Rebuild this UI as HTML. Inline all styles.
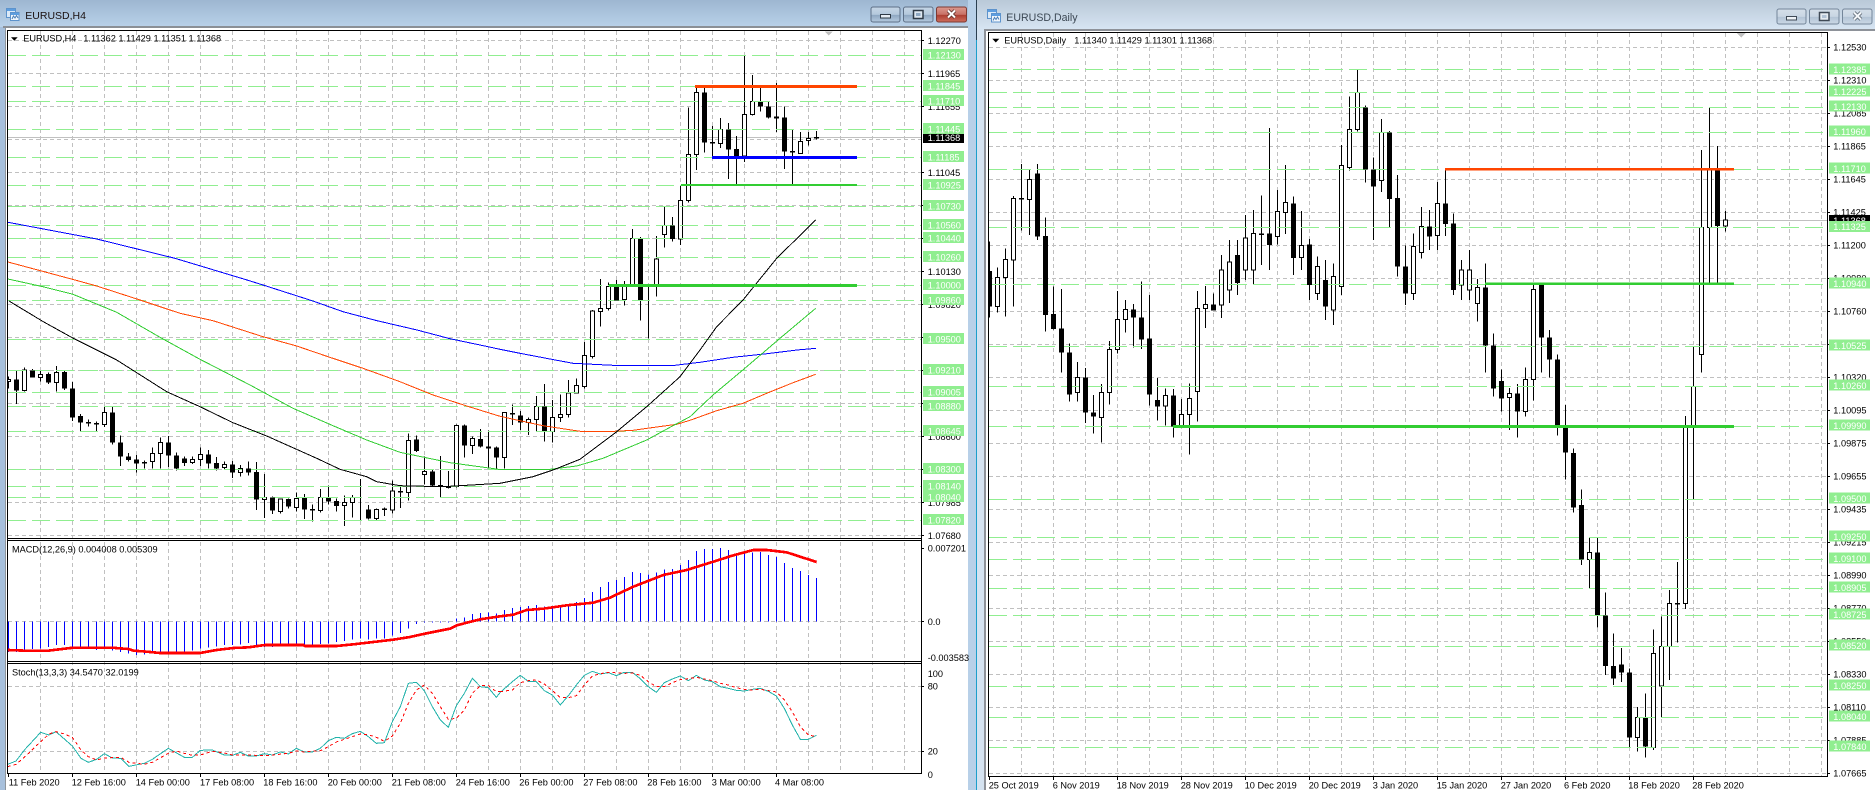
<!DOCTYPE html>
<html><head><meta charset="utf-8"><title>EURUSD</title>
<style>html,body{margin:0;padding:0;background:#fff;width:1875px;height:790px;overflow:hidden}svg{display:block}text{font-family:"Liberation Sans",sans-serif}</style></head>
<body>
<svg xmlns="http://www.w3.org/2000/svg" width="1875" height="790" viewBox="0 0 1875 790">
<defs>
<linearGradient id="t1" x1="0" y1="0" x2="0" y2="1"><stop offset="0" stop-color="#9db6d1"/><stop offset="1" stop-color="#b9d1e9"/></linearGradient>
<linearGradient id="t2" x1="0" y1="0" x2="0" y2="1"><stop offset="0" stop-color="#b9c9d8"/><stop offset="1" stop-color="#d6e4f2"/></linearGradient>
<linearGradient id="b1" x1="0" y1="0" x2="0" y2="1"><stop offset="0" stop-color="#c6d6e6"/><stop offset=".5" stop-color="#b4c8dc"/><stop offset=".55" stop-color="#8fa8c2"/><stop offset="1" stop-color="#b4c9de"/></linearGradient>
<linearGradient id="b2" x1="0" y1="0" x2="0" y2="1"><stop offset="0" stop-color="#d5dfe9"/><stop offset=".5" stop-color="#c9d6e3"/><stop offset=".55" stop-color="#b3c4d6"/><stop offset="1" stop-color="#ccd9e6"/></linearGradient>
<linearGradient id="b3" x1="0" y1="0" x2="0" y2="1"><stop offset="0" stop-color="#dc9a90"/><stop offset=".5" stop-color="#c87166"/><stop offset=".55" stop-color="#ad3f33"/><stop offset="1" stop-color="#cf6e5c"/></linearGradient>
<clipPath id="c1"><rect x="8" y="31" width="913" height="507"/></clipPath>
<clipPath id="c2"><rect x="989" y="33" width="838" height="743"/></clipPath>
</defs>

<!-- frames -->
<rect width="1875" height="790" fill="#fff"/>
<rect x="0" y="0" width="6" height="790" fill="#a7c0dc"/>
<rect x="5" y="27" width="1" height="763" fill="#8f959b"/>
<rect x="0" y="0" width="969" height="27" fill="url(#t1)"/>
<rect x="3" y="26" width="966" height="2" fill="#8b9096"/>
<rect x="968" y="0" width="8" height="790" fill="#b8d0e8"/>
<rect x="976" y="0" width="1" height="790" fill="#1c9ecb"/>
<rect x="976" y="0" width="1" height="40" fill="#2a3f50"/>
<rect x="977" y="0" width="898" height="29" fill="url(#t2)"/>
<rect x="977" y="29" width="8" height="761" fill="#d5e3f1"/>
<rect x="984" y="29" width="891" height="2" fill="#8e9299"/>
<rect x="984" y="29" width="2" height="761" fill="#8e9299"/>

<!-- icons -->
<g shape-rendering="crispEdges">
<rect x="6.5" y="8.5" width="9" height="9" fill="#dbe9f7" stroke="#5d93cc"/><rect x="7" y="9" width="8" height="2" fill="#5d9ee0"/>
<rect x="10.5" y="12.5" width="8.5" height="8" fill="#f2f7fc" stroke="#5d93cc"/><rect x="11" y="13" width="8" height="2" fill="#5d9ee0"/>
<rect x="987.5" y="9.5" width="9" height="9" fill="#dbe9f7" stroke="#5d93cc"/><rect x="988" y="10" width="8" height="2" fill="#5d9ee0"/>
<rect x="991.5" y="13.5" width="9" height="8.5" fill="#f2f7fc" stroke="#5d93cc"/><rect x="992" y="14" width="8" height="2" fill="#5d9ee0"/>
</g>
<path d="M12 19l1.5-3 1.5 2 1.5-2.5 1.5 2.5" fill="none" stroke="#4a7fb8"/>
<path d="M993 20.500l1.500-3 1.500 2 1.500-2.500 1.500 2.500" fill="none" stroke="#4a7fb8"/>
<text x="25.300" y="19" font-size="10.500" fill="#1a1010">EURUSD,H4</text>
<text x="1006.300" y="21" font-size="10.600" fill="#3c4854">EURUSD,Daily</text>

<!-- buttons w1 -->
<rect x="871" y="7" width="29" height="15" rx="2" fill="url(#b1)" stroke="#5e7087"/>
<rect x="880.500" y="14.500" width="10" height="3.500" fill="#e6edf4" stroke="#2f3a46"/>
<rect x="903.500" y="7" width="29.500" height="15" rx="2" fill="url(#b1)" stroke="#5e7087"/>
<rect x="913.500" y="10.500" width="9.500" height="8" fill="#dfe8f1" stroke="#2f3a46" stroke-width="1.500"/><rect x="916" y="13" width="4.500" height="3" fill="#8fa8c2"/>
<rect x="936.500" y="7" width="30" height="15" rx="2" fill="url(#b3)" stroke="#7d3a33"/>
<path d="M948 10.500l7 7M955 10.500l-7 7" stroke="#5a2a25" stroke-width="3.600"/>
<path d="M948 10.500l7 7M955 10.500l-7 7" stroke="#fff" stroke-width="2"/>
<!-- buttons w2 -->
<rect x="1777" y="9" width="29" height="15" rx="2" fill="url(#b2)" stroke="#74869a"/>
<rect x="1786.500" y="16.500" width="10" height="3.500" fill="#eef2f6" stroke="#3f4a56"/>
<rect x="1809.500" y="9" width="29.500" height="15" rx="2" fill="url(#b2)" stroke="#74869a"/>
<rect x="1819.500" y="12.500" width="9.500" height="8" fill="#e6ecf2" stroke="#3f4a56" stroke-width="1.500"/><rect x="1822" y="15" width="4.500" height="3" fill="#b3c4d6"/>
<rect x="1842.500" y="9" width="29.500" height="15" rx="2" fill="url(#b2)" stroke="#74869a"/>
<path d="M1854 12.500l7 7M1861 12.500l-7 7" stroke="#55606c" stroke-width="3.600"/>
<path d="M1854 12.500l7 7M1861 12.500l-7 7" stroke="#f4f7fa" stroke-width="2"/>

<!-- ===== H4 grid ===== -->
<g fill="none" stroke="#c0c0c0" stroke-width="1" stroke-dasharray="4 3" shape-rendering="crispEdges">
<path d="M40.500 31V773m32-742V773m32-742V773m32-742V773m32-742V773m32-742V773m32-742V773m32-742V773m32-742V773m32-742V773m32-742V773m32-742V773m32-742V773m32-742V773m32-742V773m32-742V773m32-742V773m32-742V773m32-742V773m32-742V773m32-742V773m32-742V773m32-742V773m32-742V773m32-742V773m32-742V773m32-742V773m32-742V773"/>
<path d="M8 40.500H921m-913 33H921m-913 33H921m-913 33H921m-913 33H921m-913 33H921m-913 33H921m-913 33H921m-913 33H921m-913 33H921m-913 33H921m-913 33H921m-913 33H921m-913 33H921m-913 33H921m-913 33H921"/>
<path d="M8 621.500H921M8 686.500H921M8 751.500H921"/>
</g>
<path d="M8 137.500H921" stroke="#c0c0c0" shape-rendering="crispEdges"/>

<g clip-path="url(#c1)" shape-rendering="crispEdges">
<!-- wicks + white bodies -->
<g transform="translate(0 280) scale(.33333)">
<path stroke="#000" stroke-width="3" fill="none" d="M25 290V325M49 272V372M73 262V335M97 267V293M121 272V305M145 278V312M169 258V335M193 272V330M217 306V423M241 402V453M265 418V440M289 425V453M313 380V441M337 381V494M361 466V558M385 519V545M409 525V578M433 542V565M457 502V565M481 472V565M505 468V561M529 518V572M553 530V558M577 530V552M601 502V558M625 510V566M649 531V572M673 544V569M697 543V594M721 555V590M745 544V587M769 546V690M793 582V714M817 650V702M841 655V700M865 655V686M889 638V695M913 642V717M937 673V725M961 627V698M985 617V674M1009 655V695M1033 646V738M1057 645V713M1081 597V722M1105 675V719M1129 685V720M1153 683V708M1177 602V701M1201 620V684M1225 460V662M1249 466V516M1273 530V614M1297 569V620M1321 528V652M1345 573V625M1369 434V622M1393 434V533M1417 470V522M1441 447V503M1465 452V565M1489 500V568"/>
<path stroke="#000" stroke-width="3" fill="#fff" d="M19 298h12V304h-12zM67 270h12V332h-12zM115 283h12V292h-12zM163 277h12V307h-12zM307 397h12V433h-12zM451 520h12V544h-12zM475 488h12V520h-12zM571 538h12V548h-12zM595 523h12V539h-12zM667 553h12V563h-12zM715 565h12V577h-12zM787 652h12V658h-12zM835 657h12V694h-12zM883 655h12V682h-12zM955 652h12V692h-12zM1027 667h12V676h-12zM1051 652h12V667h-12zM1123 688h12V716h-12zM1171 633h12V690h-12zM1219 481h12V637h-12zM1267 574h12V583h-12zM1363 436h12V620h-12zM1411 475h12V496h-12z"/>
</g>
<g transform="translate(500 260) scale(.33333)">
<path stroke="#000" stroke-width="3" fill="none" d="M13 457V625M37 433V495M61 453V510M85 472V525M109 408V513M133 372V545M157 420V548M181 403V486M205 360V473M229 355V400M253 246V385M277 150V296M301 57V200M325 68V152M349 60V122M373 63V137M397 -93V80M421 -69V182M445 78V236M469 -72V110"/>
<path stroke="#000" stroke-width="3" fill="#fff" d="M7 457h12V592h-12zM79 479h12V487h-12zM103 439h12V479h-12zM151 472h12V514h-12zM175 463h12V472h-12zM199 399h12V464h-12zM223 376h12V399h-12zM247 286h12V379h-12zM271 153h12V290h-12zM295 146h12V154h-12zM319 79h12V146h-12zM367 79h12V118h-12zM391 -65h12V79h-12zM463 -3h12V75h-12z"/>
</g>
<g transform="translate(500 0) scale(.33333)">
<path stroke="#000" stroke-width="3" fill="none" d="M493 620V743M517 651V725M541 557V735M565 323V607M589 258V510M613 258V458M637 378V472M661 354V444M685 369V537M709 408V552M733 168V486M757 225V347M781 264V335M805 304V356M829 249V396M853 319V507M877 390V552M901 396V462M925 396V437M949 393V418"/>
<path stroke="#000" stroke-width="3" fill="#fff" d="M487 677h12V703h-12zM535 601h12V717h-12zM559 463h12V601h-12zM583 277h12V463h-12zM655 388h12V430h-12zM727 343h12V468h-12zM751 304h12V343h-12zM895 424h12V460h-12zM919 415h12V421h-12z"/>
</g>
</g>

<!-- H4 green lines -->
<path fill="none" stroke="#90ee90" stroke-dasharray="18 6" shape-rendering="crispEdges" d="M8 55.500H921M8 86.500H921M8 101.500H921M8 129.500H921M8 157.500H921M8 185.500H921M8 206.500H921M8 225.500H921M8 238.500H921M8 257.500H921M8 285.500H921M8 300.500H921M8 339.500H921M8 370.500H921M8 392.500H921M8 406.500H921M8 431.500H921M8 469.500H921M8 486.500H921M8 497.500H921M8 520.500H921"/>

<g clip-path="url(#c1)" shape-rendering="crispEdges">
<g transform="translate(0 280) scale(.33333)">
<path stroke="#000" stroke-width="15" fill="none" d="M49 298V332M97 272V293M145 282V308M193 276V326M217 325V413M241 408V428M265 426V431M289 429V433M337 397V488M361 487V530M385 529V540M409 538V551M433 546V551M505 487V527M529 526V566M553 535V549M625 523V551M649 549V565M697 553V578M745 566V578M769 576V658M817 652V692M865 657V680M913 654V689M937 687V692M985 654V665M1009 663V678M1105 688V716M1153 685V690M1201 633V638M1249 478V513M1297 574V617M1321 615V620M1345 619V624M1393 436V496M1441 477V500M1465 500V505M1489 503V533"/>
</g>
<g transform="translate(500 260) scale(.33333)">
<path stroke="#000" stroke-width="15" fill="none" d="M37 459V464M61 466V488M133 440V513M349 79V121M421 -63V120M445 76V80"/>
</g>
<g transform="translate(500 0) scale(.33333)">
<path stroke="#000" stroke-width="15" fill="none" d="M517 677V717M613 277V428M637 426V431M685 388V449M709 447V468M781 306V320M805 319V352M829 350V355M853 352V455M877 453V458M949 411V416"/>
</g>
<!-- moving averages -->
<polyline fill="none" stroke="#0000ff" points="8,222.300 96.700,239 175,258.300 247,280 263,285 287,292.700 312,300.700 343,311.700 377,320.700 417,330 450,338.700 480,345 500,349.300 520,353.300 550,359 573,363.300 613,365.300 675,365.300 700,362.300 733,357.300 767,353.700 797,350 816,348.300"/>
<polyline fill="none" stroke="#ff4500" points="8,262 75,280 96.700,286 140,300 180,313.300 213,320.700 263,336.700 296.700,346 328,356.700 363,368.300 400,381.700 433,395 466.700,406 500,416.300 520,420.700 543,425.700 566.700,429.300 583,431.700 606.700,431.700 633,430.300 656.700,427 676.700,424.300 690,420.300 700,416.700 716.700,410.700 743,403.300 766.700,393.300 793,382.700 815.700,374.300"/>
<polyline fill="none" stroke="#32cd32" points="8,279 43,286.700 73,294.300 116.700,312.300 160,337.300 200,359.300 250,385 293,408.300 333,425.700 366.700,440 400,452.300 450,462.700 500,469.500 550,469.300 576.700,466 603,458.300 646.700,440 670,427.300 690,416.700 713,395 746.700,366.700 780,338.300 815.700,308.300"/>
<polyline fill="none" stroke="#000" points="9,301 43.300,321.700 73.300,338.300 116.700,360 166.700,391.700 200,406.700 233,422.700 266.700,436 316.700,458.300 340,469.300 366.700,476.700 376.700,481.700 400,485.700 443,486.700 500,483.300 533,476.700 553,470 580,459.300 616.700,431.700 646.700,406.700 680,376.700 700,350 716.700,326.700 743,300 776.700,258.300 815.700,220"/>
<!-- trend lines -->
<rect x="695" y="85" width="162" height="3" fill="#ff4500"/>
<rect x="712" y="156" width="145" height="3" fill="#0000ff"/>
<rect x="681" y="184" width="176" height="2" fill="#32cd32"/>
<rect x="609" y="284" width="248" height="3" fill="#32cd32"/>
<path d="M824.500 31.500h8l-4 4z" fill="#c0c0c0"/>
</g>

<!-- MACD -->
<g shape-rendering="crispEdges" fill="none">
<g transform="translate(0 530) scale(.33333)">
<path stroke="#0000ff" stroke-width="3" d="M25 274V366M49 274V366M73 274V360M97 274V357M121 274V355M145 274V351M169 274V345M193 274V345M217 274V352M241 274V353M265 274V356M289 274V360M313 274V353M337 274V362M361 274V366M385 274V371M409 274V375M433 274V373M457 274V371M481 274V367M505 274V368M529 274V368M553 274V367M577 274V361M601 274V356M625 274V352M649 274V350M673 274V345M697 274V345M721 274V343M745 274V339M769 274V353M793 274V351M817 274V351M841 274V350M865 274V349M889 274V348M913 274V345M937 274V343M961 274V342M985 274V341M1009 274V336M1033 274V333M1057 274V328M1081 274V325M1105 274V328M1129 274V326M1153 274V325M1177 274V316M1201 274V309M1225 274V295M1249 274V282M1273 274V277M1297 274V278M1321 274V278M1345 274V278M1369 274V265M1393 274V262M1417 274V252M1441 274V249M1465 274V248M1489 274V250"/>
<polyline stroke="#ff0000" stroke-width="8" points="23,360 75,362 145,362 195,356 220,353 335,353 385,357 400,362 440,365 480,369 600,369 650,360 700,354 745,352 795,345 910,345 915,348 1010,348 1060,343 1180,329 1230,321 1270,312 1350,296 1370,286 1440,268 1500,259"/>
<polyline stroke="#20b2aa" stroke-width="3" points="23,703 48,693 75,658 122,607 147,615 168,605 217,648 243,685 265,697 290,688 313,671 337,684 362,685 387,709 433,700 457,688 505,655 553,682 577,682 601,661 637,660 673,675 697,676 721,667 745,678 769,678 793,671 817,675 841,666 865,672 889,655 913,666 937,666 961,655 985,632 1009,622 1033,625 1057,611 1081,604 1105,620 1129,640 1153,638 1177,575 1201,530 1225,460 1249,457 1273,482 1297,530 1321,570 1345,592 1369,527 1393,490 1417,445 1441,470 1465,473 1489,502 1500,488"/>
<polyline stroke="#ff0000" stroke-width="3" stroke-dasharray="9 9" points="23,710 48,703 75,680 122,635 147,612 168,605 193,612 217,622 243,660 265,680 290,690 313,684 362,682 387,697 433,703 457,697 505,670 529,663 553,670 577,676 601,675 637,664 673,669 697,675 745,675 793,677 817,675 865,670 889,663 913,666 961,662 985,650 1009,636 1033,628 1057,620 1081,612 1105,614 1129,622 1153,634 1177,618 1201,580 1225,520 1249,480 1273,465 1297,490 1321,530 1345,568 1369,565 1393,540 1417,490 1441,467 1465,467 1489,485 1500,485"/>
</g>
<g transform="translate(500 530) scale(.33333)">
<path stroke="#0000ff" stroke-width="3" d="M13 274V240M37 274V234M61 274V231M85 274V228M109 274V225M133 274V229M157 274V229M181 274V227M205 274V225M229 274V216M253 274V204M277 274V186M301 274V171M325 274V156M349 274V150M373 274V141M397 274V126M421 274V129M445 274V133M469 274V127M493 274V118M517 274V117M541 274V105M565 274V90M589 274V63M613 274V57M637 274V57M661 274V54M685 274V60M709 274V70M733 274V67M757 274V67M781 274V66M805 274V75M829 274V81M853 274V99M877 274V114M901 274V123M925 274V135M949 274V144"/>
<polyline stroke="#ff0000" stroke-width="8" points="0,259 40,254 80,240 130,236 200,226 280,218 330,203 400,170 490,135 560,120 640,95 700,76 760,60 800,60 860,67 900,80 950,96"/>
<polyline stroke="#20b2aa" stroke-width="3" points="0,488 37,455 61,436 85,454 109,455 133,482 157,495 181,525 205,497 229,465 253,436 277,424 301,432 325,428 349,437 373,427 397,427 421,446 445,470 469,487 493,458 517,447 541,438 565,452 589,436 613,450 637,455 661,470 685,475 709,481 733,483 757,478 781,475 805,484 829,498 853,535 877,585 901,628 925,628 949,616"/>
<polyline stroke="#ff0000" stroke-width="3" stroke-dasharray="9 9" points="0,485 37,480 61,458 85,452 109,450 133,462 157,482 181,503 205,503 229,497 253,465 277,438 301,431 325,427 373,430 397,429 421,436 445,455 469,470 493,470 517,458 541,449 565,446 589,442 613,447 637,452 661,460 685,465 709,473 733,478 757,480 781,478 805,482 829,486 853,510 877,545 901,590 925,615 949,620"/>
</g>
</g>

<!-- H4 borders & ticks -->
<g fill="none" stroke="#000" shape-rendering="crispEdges">
<path d="M7.500 30V774M921.500 30V774M7 30.500H922M7 538.500H922M7 540.500H922M7 661.500H922M7 663.500H922M7 773.500H922"/>
<path d="M921 40.500h3M921 73.500h3M921 106.500h3M921 172.500h3M921 205.500h3M921 238.500h3M921 271.500h3M921 304.500h3M921 337.500h3M921 370.500h3M921 403.500h3M921 436.500h3M921 469.500h3M921 502.500h3M921 535.500h3M921 548.500h3M921 621.500h3M921 686.500h3M921 751.500h3"/>
<path d="M8.500 773v4M72.500 773v4M136.500 773v4M200.500 773v4M264.500 773v4M328.500 773v4M392.500 773v4M456.500 773v4M520.500 773v4M584.500 773v4M648.500 773v4M712.500 773v4M776.500 773v4"/>
</g>
<rect x="0" y="0" width="0" height="0"/>

<!-- H4 text -->
<g font-size="9.200" fill="#000">
<path d="M11 37.300h6.700l-3.350 3.400z"/>
<text x="23.300" y="41.500">EURUSD,H4</text><text x="83.300" y="41.500">1.11362 1.11429 1.11351 1.11368</text>
<text x="12" y="552.700">MACD(12,26,9) 0.004008 0.005309</text>
<text x="12" y="675.700">Stoch(13,3,3) 34.5470 32.0199</text>
<text x="927.700" y="44">1.12270</text><text x="927.700" y="77">1.11965</text><text x="927.700" y="110">1.11655</text><text x="927.700" y="176">1.11045</text><text x="927.700" y="209">1.10735</text><text x="927.700" y="242">1.10430</text><text x="927.700" y="275">1.10130</text><text x="927.700" y="308">1.09820</text><text x="927.700" y="341">1.09515</text><text x="927.700" y="374">1.09210</text><text x="927.700" y="407">1.08905</text><text x="927.700" y="440">1.08600</text><text x="927.700" y="473">1.08295</text><text x="927.700" y="506">1.07985</text><text x="927.700" y="539">1.07680</text>
<text x="927.700" y="551.500">0.007201</text><text x="927.700" y="625">0.0</text><text x="927.700" y="661">-0.003583</text>
<text x="927.700" y="677">100</text><text x="927.700" y="689.500">80</text><text x="927.700" y="754.500">20</text><text x="927.700" y="778">0</text>
<text x="8.700" y="785.700">11 Feb 2020</text><text x="71.700" y="785.700">12 Feb 16:00</text><text x="135.700" y="785.700">14 Feb 00:00</text><text x="200" y="785.700">17 Feb 08:00</text><text x="263.300" y="785.700">18 Feb 16:00</text><text x="327.700" y="785.700">20 Feb 00:00</text><text x="391.700" y="785.700">21 Feb 08:00</text><text x="455.700" y="785.700">24 Feb 16:00</text><text x="519.300" y="785.700">26 Feb 00:00</text><text x="583.300" y="785.700">27 Feb 08:00</text><text x="647.300" y="785.700">28 Feb 16:00</text><text x="711.700" y="785.700">3 Mar 00:00</text><text x="775" y="785.700">4 Mar 08:00</text>
</g>
<rect x="923" y="132" width="41" height="11" fill="#000"/>
<path fill="none" stroke="#90ee90" stroke-width="11" shape-rendering="crispEdges" d="M923 54.500H964M923 85.500H964M923 100.500H964M923 128.500H964M923 156.500H964M923 184.500H964M923 205.500H964M923 224.500H964M923 237.500H964M923 256.500H964M923 284.500H964M923 299.500H964M923 338.500H964M923 369.500H964M923 391.500H964M923 405.500H964M923 430.500H964M923 468.500H964M923 485.500H964M923 496.500H964M923 519.500H964"/>
<g font-size="9.200" fill="#fff">
<text x="927.700" y="141">1.11368</text>
<text x="927.700" y="58.300">1.12130</text><text x="927.700" y="89.300">1.11845</text><text x="927.700" y="104.300">1.11710</text><text x="927.700" y="132.300">1.11445</text><text x="927.700" y="160.300">1.11185</text><text x="927.700" y="188.300">1.10925</text><text x="927.700" y="209.300">1.10730</text><text x="927.700" y="228.300">1.10560</text><text x="927.700" y="241.300">1.10440</text><text x="927.700" y="260.300">1.10260</text><text x="927.700" y="288.300">1.10000</text><text x="927.700" y="303.300">1.09860</text><text x="927.700" y="342.300">1.09500</text><text x="927.700" y="373.300">1.09210</text><text x="927.700" y="395.300">1.09005</text><text x="927.700" y="409.300">1.08880</text><text x="927.700" y="434.300">1.08645</text><text x="927.700" y="472.300">1.08300</text><text x="927.700" y="489.300">1.08140</text><text x="927.700" y="500.300">1.08040</text><text x="927.700" y="523.300">1.07820</text>
</g>

<!-- ===== Daily grid ===== -->
<g fill="none" stroke="#c0c0c0" stroke-width="1" stroke-dasharray="4 3" shape-rendering="crispEdges">
<path d="M1021.500 33V776m32-743V776m32-743V776m32-743V776m32-743V776m32-743V776m32-743V776m32-743V776m32-743V776m32-743V776m32-743V776m32-743V776m32-743V776m32-743V776m32-743V776m32-743V776m32-743V776m32-743V776m32-743V776m32-743V776m32-743V776m32-743V776m32-743V776m32-743V776m32-743V776m32-743V776"/>
<path d="M989 47.500H1827m-838 33H1827m-838 33H1827m-838 33H1827m-838 33H1827m-838 33H1827m-838 33H1827m-838 33H1827m-838 33H1827m-838 33H1827m-838 33H1827m-838 33H1827m-838 33H1827m-838 33H1827m-838 33H1827m-838 33H1827m-838 33H1827m-838 33H1827m-838 33H1827m-838 33H1827m-838 33H1827m-838 33H1827m-838 33H1827"/>
</g>
<path d="M989 220.500H1827" stroke="#c0c0c0" shape-rendering="crispEdges"/>

<g clip-path="url(#c2)" shape-rendering="crispEdges">
<g transform="translate(820 260) scale(.33333)">
<path stroke="#000" stroke-width="3" fill="none" d="M508 -55V173M532 22V158M556 -35V170M580 -192V140M604 -288V-88M628 -270V-75M652 -288V-60M676 -128V215M700 80V208M724 87V338M748 250V425M772 306V425M796 324V489M820 405V521M844 372V548M868 243V434M892 93V281M916 120V218M940 132V262M964 64V267M988 105V436M1012 354V482M1036 385V497M1060 387V533M1084 417V500M1108 370V584M1132 93V485M1156 78V204M1180 100V152"/>
<path stroke="#000" stroke-width="3" fill="#fff" d="M526 52h12V140h-12zM550 -2h12V52h-12zM574 -185h12V0h-12zM622 -242h12V-182h-12zM766 352h12V398h-12zM838 397h12V472h-12zM862 268h12V397h-12zM886 178h12V268h-12zM910 148h12V178h-12zM1030 406h12V438h-12zM1078 463h12V500h-12zM1102 415h12V463h-12zM1126 145h12V394h-12zM1150 133h12V145h-12z"/>
</g>
<g transform="translate(1220 0) scale(.33333)">
<path stroke="#000" stroke-width="3" fill="none" d="M4 765V954M28 720V909M52 720V885M76 645V840M100 630V855M124 586V795M148 384V810M172 570V733M196 495V702M220 589V825M244 633V810M268 717V900M292 770V900M316 780V960M340 790V975M364 435V885M388 289V512M412 210V395M436 316V548M460 472V720M484 357V576M508 393V681M532 525V830M556 737V915M580 700V900M604 621V776M628 630V750M652 546V750M676 505V708M700 640V885M724 780V900M748 750V900"/>
<path stroke="#000" stroke-width="3" fill="#fff" d="M-2 810h12V915h-12zM22 786h12V870h-12zM70 714h12V810h-12zM94 700h12V810h-12zM166 634h12V710h-12zM190 607h12V638h-12zM238 736h12V773h-12zM286 800h12V880h-12zM334 830h12V930h-12zM358 496h12V860h-12zM382 388h12V502h-12zM406 278h12V388h-12zM478 397h12V542h-12zM574 740h12V880h-12zM598 680h12V758h-12zM646 610h12V706h-12zM718 810h12V855h-12zM742 810h12V870h-12z"/>
</g>
<g transform="translate(1475 260) scale(.33333)">
<path stroke="#000" stroke-width="3" fill="none" d="M7 57V185M31 10V338M55 220V410M79 328V455M103 384V510M127 372V533M151 322V470M175 72V422M199 72V338M223 210V353M247 283V527M271 435V658M295 565V758M319 688V915"/>
<path stroke="#000" stroke-width="3" fill="#fff" d="M1 82h12V130h-12zM97 400h12V412h-12zM145 358h12V455h-12zM169 88h12V358h-12z"/>
</g>
<g transform="translate(1475 530) scale(.33333)">
<path stroke="#000" stroke-width="3" fill="none" d="M343 24V175M367 24V293M391 187V435M415 310V465M439 354V456M463 415V652M487 531V665M511 490V683M535 298V660M559 260V562M583 180V450M607 96V338M631 -342V237M655 -550V-92M679 -1140V-472M703 -1266V-741M727 -1152V-739M751 -957V-895"/>
<path stroke="#000" stroke-width="3" fill="#fff" d="M337 67h12V88h-12zM481 562h12V622h-12zM529 370h12V652h-12zM553 349h12V468h-12zM577 220h12V349h-12zM625 -307h12V220h-12zM649 -430h12V-310h-12zM673 -907h12V-526h-12zM697 -1081h12V-907h-12zM745 -930h12V-912h-12z"/>
</g>
</g>

<path fill="none" stroke="#90ee90" stroke-dasharray="18 6" shape-rendering="crispEdges" d="M989 69.500H1827M989 92.500H1827M989 107.500H1827M989 132.500H1827M989 169.500H1827M989 227.500H1827M989 284.500H1827M989 346.500H1827M989 386.500H1827M989 426.500H1827M989 499.500H1827M989 537.500H1827M989 559.500H1827M989 588.500H1827M989 615.500H1827M989 646.500H1827M989 686.500H1827M989 717.500H1827M989 747.500H1827"/>

<g clip-path="url(#c2)" shape-rendering="crispEdges">
<g transform="translate(820 260) scale(.33333)">
<path stroke="#000" stroke-width="15" fill="none" d="M508 33V140M604 -186V-181M652 -260V-70M676 -72V165M700 162V207M724 205V278M748 277V404M796 352V458M820 457V470M940 148V173M964 172V238M988 235V404M1012 420V440M1060 406V500M1180 133V152"/>
</g>
<g transform="translate(1220 0) scale(.33333)">
<path stroke="#000" stroke-width="15" fill="none" d="M52 765V849M124 700V705M148 700V735M220 610V774M268 733V855M316 840V920M436 322V508M460 508V560M508 397V597M532 594V800M556 800V880M628 680V710M676 610V672M700 670V870"/>
</g>
<g transform="translate(1475 260) scale(.33333)">
<path stroke="#000" stroke-width="15" fill="none" d="M31 82V257M55 256V385M79 363V416M127 400V455M199 72V233M223 232V298M247 298V497M271 497V578M295 579V743M319 735V898"/>
</g>
<g transform="translate(1475 530) scale(.33333)">
<path stroke="#000" stroke-width="15" fill="none" d="M367 67V255M391 257V408M415 408V446M439 403V428M463 427V623M511 564V650M607 219V224M727 -1081V-912"/>
</g>
<rect x="1445" y="168" width="289" height="2.500" fill="#ff4500"/>
<rect x="1485" y="282.500" width="249" height="2.500" fill="#32cd32"/>
<rect x="1173" y="425" width="561" height="3" fill="#32cd32"/>
<path d="M1736.700 33h9l-4.500 4.700z" fill="#c0c0c0"/>
</g>

<g fill="none" stroke="#000" shape-rendering="crispEdges">
<path d="M988.500 32V777M1827.500 32V777M988 32.500H1828M988 776.500H1828"/>
<path d="M1827 47.500h3M1827 80.500h3M1827 113.500h3M1827 146.500h3M1827 179.500h3M1827 212.500h3M1827 245.500h3M1827 278.500h3M1827 311.500h3M1827 344.500h3M1827 377.500h3M1827 410.500h3M1827 443.500h3M1827 476.500h3M1827 509.500h3M1827 542.500h3M1827 575.500h3M1827 608.500h3M1827 641.500h3M1827 674.500h3M1827 707.500h3M1827 740.500h3M1827 773.500h3"/>
<path d="M989.500 776v4M1053.500 776v4M1117.500 776v4M1181.500 776v4M1245.500 776v4M1309.500 776v4M1373.500 776v4M1437.500 776v4M1501.500 776v4M1565.500 776v4M1629.500 776v4M1693.500 776v4"/>
</g>

<g font-size="9.200" fill="#000">
<path d="M992.300 38.700h7l-3.500 3.800z"/>
<text x="1004.300" y="43.700">EURUSD,Daily</text><text x="1074.300" y="43.700">1.11340 1.11429 1.11301 1.11368</text>
<text x="1833.300" y="50.700">1.12530</text><text x="1833.300" y="83.700">1.12310</text><text x="1833.300" y="116.700">1.12085</text><text x="1833.300" y="149.700">1.11865</text><text x="1833.300" y="182.700">1.11645</text><text x="1833.300" y="215.700">1.11425</text><text x="1833.300" y="248.700">1.11200</text><text x="1833.300" y="281.700">1.10980</text><text x="1833.300" y="314.700">1.10760</text><text x="1833.300" y="347.700">1.10540</text><text x="1833.300" y="380.700">1.10320</text><text x="1833.300" y="413.700">1.10095</text><text x="1833.300" y="446.700">1.09875</text><text x="1833.300" y="479.700">1.09655</text><text x="1833.300" y="512.700">1.09435</text><text x="1833.300" y="545.700">1.09215</text><text x="1833.300" y="578.700">1.08990</text><text x="1833.300" y="611.700">1.08770</text><text x="1833.300" y="644.700">1.08550</text><text x="1833.300" y="677.700">1.08330</text><text x="1833.300" y="710.700">1.08110</text><text x="1833.300" y="743.700">1.07885</text><text x="1833.300" y="776.700">1.07665</text>
<text x="988.700" y="788.500">25 Oct 2019</text><text x="1052.700" y="788.500">6 Nov 2019</text><text x="1116.700" y="788.500">18 Nov 2019</text><text x="1180.700" y="788.500">28 Nov 2019</text><text x="1244.700" y="788.500">10 Dec 2019</text><text x="1308.700" y="788.500">20 Dec 2019</text><text x="1372.700" y="788.500">3 Jan 2020</text><text x="1436.700" y="788.500">15 Jan 2020</text><text x="1500.700" y="788.500">27 Jan 2020</text><text x="1564" y="788.500">6 Feb 2020</text><text x="1628.300" y="788.500">18 Feb 2020</text><text x="1692.300" y="788.500">28 Feb 2020</text>
</g>
<rect x="1829" y="215" width="41" height="11" fill="#000"/>
<text x="1833.300" y="224" font-size="9.200" fill="#fff">1.11368</text>
<path fill="none" stroke="#90ee90" stroke-width="11" shape-rendering="crispEdges" d="M1829 69H1870M1829 91H1870M1829 106H1870M1829 131H1870M1829 168H1870M1829 226.500H1870M1829 283H1870M1829 345H1870M1829 385H1870M1829 425H1870M1829 498H1870M1829 536H1870M1829 558H1870M1829 587H1870M1829 614H1870M1829 645H1870M1829 685H1870M1829 716H1870M1829 746H1870"/>
<g font-size="9.200" fill="#fff">
<text x="1833.300" y="72.800">1.12385</text><text x="1833.300" y="94.800">1.12225</text><text x="1833.300" y="109.800">1.12130</text><text x="1833.300" y="134.800">1.11960</text><text x="1833.300" y="171.800">1.11710</text><text x="1833.300" y="230">1.11325</text><text x="1833.300" y="286.800">1.10940</text><text x="1833.300" y="348.800">1.10525</text><text x="1833.300" y="388.800">1.10260</text><text x="1833.300" y="428.800">1.09990</text><text x="1833.300" y="501.800">1.09500</text><text x="1833.300" y="539.800">1.09250</text><text x="1833.300" y="561.800">1.09100</text><text x="1833.300" y="590.800">1.08905</text><text x="1833.300" y="617.800">1.08725</text><text x="1833.300" y="648.800">1.08520</text><text x="1833.300" y="688.800">1.08250</text><text x="1833.300" y="719.800">1.08040</text><text x="1833.300" y="749.800">1.07840</text>
</g>
</svg>
</body></html>
